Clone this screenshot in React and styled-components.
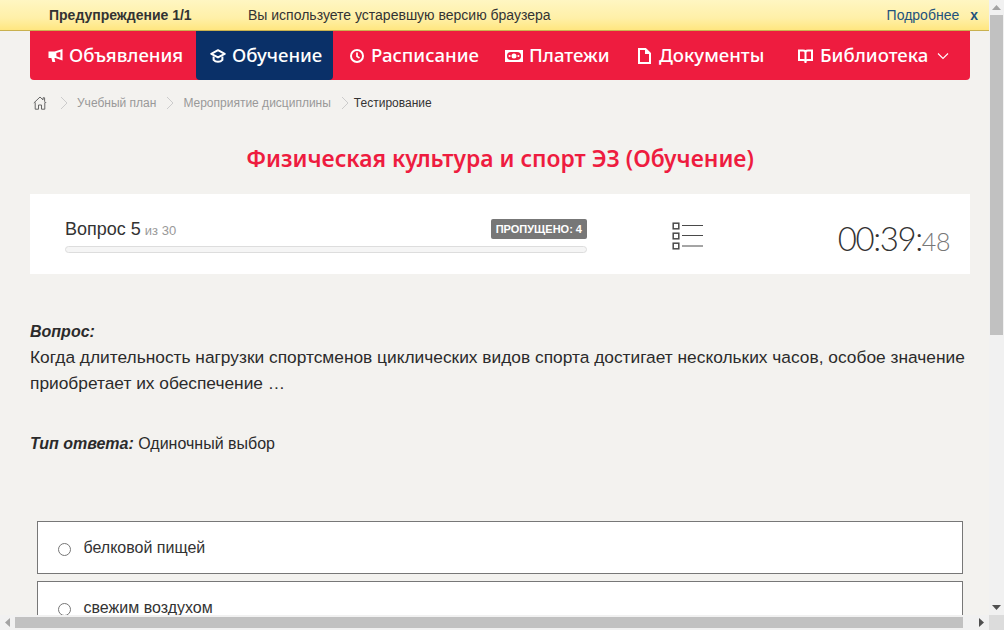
import React from "react";
import styled, { createGlobalStyle } from "styled-components";

const Global = createGlobalStyle`
  html, body {
    margin: 0;
    padding: 0;
    overflow: hidden;
  }
  body {
    background: #f3f2ef;
    font-family: "Liberation Sans", Arial, sans-serif;
    color: #333;
  }
`;

const Frame = styled.div`
  width: 1004px;
  height: 630px;
  display: grid;
  grid-template-columns: 989px 15px;
  grid-template-rows: 615px 15px;
  overflow: hidden;
`;

const Viewport = styled.div`
  overflow: hidden;
  background: #f3f2ef;
`;

const Banner = styled.div`
  height: 30px;
  border-bottom: 1px solid #c9b14f;
  background: linear-gradient(to bottom, #fff6c2 0%, #fff0a8 60%, #ffe680 100%);
  display: flex;
  align-items: center;
  padding: 0 11px 0 49px;
  font-size: 14px;
  color: #333;
`;

const BannerTitle = styled.b`
  width: 199px;
`;

const BannerText = styled.span`
  flex: 1;
`;

const BannerLink = styled.a`
  color: #23527c;
  margin-right: 11px;
`;

const BannerClose = styled.b`
  color: #23527c;
`;

const Page = styled.div`
  padding: 0 19px 0 30px;
`;

const Nav = styled.nav`
  height: 49px;
  display: flex;
  background: #ee1c3f;
  border-radius: 0 0 4px 4px;
`;

const NavItem = styled.a`
  width: ${(p) => p.$w}px;
  flex: none;
  box-sizing: border-box;
  padding: 0 0 2px ${(p) => p.$pad}px;
  display: flex;
  align-items: center;
  gap: ${(p) => p.$gap}px;
  color: #fff;
  background: ${(p) => (p.$active ? "#0a3068" : "transparent")};
  border-radius: ${(p) => (p.$active ? "0 0 4px 4px" : "0")};
  font-family: "Noto Sans", sans-serif;
  font-size: 18.6px;
  font-weight: 500;
  white-space: nowrap;
  svg {
    flex: none;
    margin-top: 2px;
  }
`;

const Crumbs = styled.div`
  height: 46px;
  display: flex;
  align-items: center;
  padding-left: 3px;
  font-size: 12px;
  color: #999;
`;

const Crumb = styled.span`
  margin-left: ${(p) => p.$ml}px;
  color: ${(p) => (p.$current ? "#333" : "#999")};
`;

const CrumbIcon = styled.svg`
  flex: none;
  margin-left: ${(p) => p.$ml || 0}px;
`;

const Title = styled.h1`
  margin: 0;
  height: 68px;
  box-sizing: border-box;
  padding-top: 15px;
  line-height: 36px;
  text-align: center;
  font-family: "Noto Sans", sans-serif;
  font-size: 22.85px;
  font-weight: 600;
  color: #ee1c3f;
`;

const StatusCard = styled.section`
  height: 80px;
  background: #fff;
  display: flex;
  align-items: flex-start;
  padding-left: 35px;
`;

const Progress = styled.div`
  width: 522px;
  padding-top: 25px;
`;

const ProgressHead = styled.div`
  height: 27px;
  display: flex;
  align-items: flex-start;
  justify-content: space-between;
`;

const QuestionNo = styled.div`
  font-size: 18px;
  line-height: 21px;
  color: #333;
  small {
    font-size: 13px;
    color: #999;
    margin-left: -1px;
  }
`;

const Skipped = styled.span`
  background: #777;
  color: #fff;
  font-size: 11px;
  font-weight: 700;
  border-radius: 2px;
  padding: 3px 5px;
  line-height: 14px;
`;

const Bar = styled.div`
  height: 7px;
  box-sizing: border-box;
  border: 1px solid #ddd;
  border-radius: 4px;
  background: #f5f5f5;
`;

const ListButton = styled.svg`
  margin: 28px 0 0 85px;
  flex: none;
`;

const Timer = styled.div`
  margin-left: auto;
  padding: 23px 20px 0 0;
  font-family: "Lato", sans-serif;
  font-size: 33px;
  font-weight: 300;
  line-height: 42px;
  letter-spacing: -1.4px;
  color: #333;
  small {
    font-size: 25px;
    letter-spacing: -0.4px;
    color: #777;
  }
`;

const Question = styled.div`
  margin-top: 45px;
  font-size: 17.33px;
  line-height: 26px;
  color: #2b2b2b;
`;

const QuestionLabel = styled.div`
  font-size: 16px;
  font-weight: 700;
  font-style: italic;
  line-height: 25px;
`;

const AnswerType = styled.div`
  margin-top: 35px;
  font-size: 16px;
  line-height: 26px;
  color: #2b2b2b;
`;

const Answers = styled.div`
  margin: 64px 7px 0;
  display: flex;
  flex-direction: column;
  gap: 7px;
`;

const Answer = styled.label`
  height: 53px;
  box-sizing: border-box;
  border: 1px solid #777;
  background: #fff;
  display: flex;
  align-items: center;
  padding-left: 20px;
  font-size: 16px;
  color: #333;
  gap: 12.5px;
`;

const Radio = styled.input`
  margin: 3px 0 0;
  width: 13px;
  height: 13px;
`;

const ScrollY = styled.div`
  background: #f1f1f1;
  display: flex;
  flex-direction: column;
  align-items: center;
  justify-content: space-between;
  position: relative;
`;

const ThumbY = styled.div`
  position: absolute;
  top: 15px;
  left: 1px;
  width: 13px;
  height: 320px;
  background: #c1c1c1;
`;

const ScrollX = styled.div`
  background: #f1f1f1;
  display: flex;
  align-items: center;
  justify-content: space-between;
  position: relative;
`;

const ThumbX = styled.div`
  position: absolute;
  left: 15px;
  top: 2px;
  width: 948px;
  height: 11px;
  background: #c1c1c1;
`;

const Corner = styled.div`
  background: #dcdcdc;
`;

const Arrow = styled.svg`
  flex: none;
  margin: ${(p) => p.$m || "0"};
`;

const Megaphone = ({ hole }) => (
  <svg width="15" height="15" viewBox="0 0 15 15" fill="none">
    <path d="M.5 3.5h6.2L14.5 1v11.5L7.5 10H6.4l.9 4H4.4l-1-4H.5z" fill="#fff" />
    <path d="M8.4 5l4-1.2v6L8.4 8.3z" fill={hole} />
  </svg>
);

const Cap = () => (
  <svg width="16" height="16" viewBox="0 0 16 16" fill="none">
    <path d="M8 2.2L1.3 5.8 8 9.4l6.7-3.6z" stroke="#fff" strokeWidth="2" strokeLinejoin="round" />
    <path d="M3.6 8.4v3.4c1.1 1.4 2.800 2 4.400 2s3.300-.6 4.400-2V8.400" stroke="#fff" strokeWidth="2" />
  </svg>
);

const Clock = () => (
  <svg width="16" height="16" viewBox="0 0 16 16" fill="none">
    <circle cx="8" cy="8" r="6" stroke="#fff" strokeWidth="2" />
    <path d="M8 4.5V8.4L10.5 10" stroke="#fff" strokeWidth="1.7" />
  </svg>
);

const Money = () => (
  <svg width="18" height="12" viewBox="0 0 18 12" fill="none">
    <rect x="0" y="0" width="18" height="12" fill="#fff" />
    <rect x="2" y="2" width="14" height="8" rx="4" fill="#ee1c3f" />
    <circle cx="9" cy="6" r="2.5" fill="#fff" />
    <circle cx="4.6" cy="6" r="1.1" fill="#fff" />
    <circle cx="13.4" cy="6" r="1.1" fill="#fff" />
  </svg>
);

const Doc = () => (
  <svg width="13" height="16" viewBox="0 0 13 16" fill="none">
    <path d="M1 1h6.5L12 5.500V15H1z" stroke="#fff" strokeWidth="2" />
    <path d="M7 1v5h5z" fill="#fff" />
  </svg>
);

const Book = () => (
  <svg width="15" height="16" viewBox="0 0 15 16" fill="none">
    <path d="M1 2.5h4c1.2 0 2 .4 2.500 1 .5-.6 1.300-1 2.500-1h4V12H9.500c-1 0-1.500.3-2 .8-.5-.5-1-.8-2-.8H1z" stroke="#fff" strokeWidth="2" />
    <path d="M7.5 3v12" stroke="#fff" strokeWidth="2" />
  </svg>
);

const Chevron = () => (
  <svg width="12" height="8" viewBox="0 0 12 8" fill="none" style={{ marginLeft: 2 }}>
    <path d="M1 1.5l5 5 5-5" stroke="#fff" strokeWidth="1.1" />
  </svg>
);

const Home = () => (
  <CrumbIcon width="14" height="14" viewBox="0 0 14 14" fill="none">
    <path d="M.8 7L7 1l3 2.900V1.800h1.600v3.600L13.200 7M2.200 6.400v6.800h3.300V9h3v4.200h3.300V6.400" stroke="#666" strokeWidth="1" />
  </CrumbIcon>
);

const Sep = ({ ml }) => (
  <CrumbIcon $ml={ml} width="8" height="14" viewBox="0 0 8 14" fill="none">
    <path d="M1 1l6 6-6 6" stroke="#ccc" strokeWidth="1" />
  </CrumbIcon>
);

const App = () => (
  <>
    <Global />
    <Frame>
      <Viewport>
        <Banner>
          <BannerTitle>Предупреждение 1/1</BannerTitle>
          <BannerText>Вы используете устаревшую версию браузера</BannerText>
          <BannerLink>Подробнее</BannerLink>
          <BannerClose>x</BannerClose>
        </Banner>
        <Page>
          <Nav>
            <NavItem $w={166} $pad={18} $gap={6}><Megaphone hole="#ee1c3f" />Объявления</NavItem>
            <NavItem $w={137} $pad={14} $gap={6} $active><Cap />Обучение</NavItem>
            <NavItem $w={156} $pad={16} $gap={6}><Clock />Расписание</NavItem>
            <NavItem $w={132} $pad={16} $gap={6}><Money />Платежи</NavItem>
            <NavItem $w={156} $pad={17} $gap={8}><Doc />Документы</NavItem>
            <NavItem $w={193} $pad={21} $gap={7}><Book />Библиотека<Chevron /></NavItem>
          </Nav>
          <Crumbs>
            <Home />
            <Sep ml={13} />
            <Crumb $ml={9}>Учебный план</Crumb>
            <Sep ml={10} />
            <Crumb $ml={9}>Мероприятие дисциплины</Crumb>
            <Sep ml={10} />
            <Crumb $ml={5} $current>Тестирование</Crumb>
          </Crumbs>
          <Title>Физическая культура и спорт ЭЗ (Обучение)</Title>
          <StatusCard>
            <Progress>
              <ProgressHead>
                <QuestionNo>Вопрос 5 <small>из 30</small></QuestionNo>
                <Skipped>ПРОПУЩЕНО: 4</Skipped>
              </ProgressHead>
              <Bar />
            </Progress>
            <ListButton width="32" height="28" viewBox="0 0 32 28" fill="none">
              <g stroke="#4a4a4a">
                <rect x="1.2" y="1.2" width="5.6" height="5.6" strokeWidth="1.5" />
                <rect x="1.2" y="11.2" width="5.6" height="5.6" strokeWidth="1.5" />
                <rect x="1.2" y="21.2" width="5.6" height="5.6" strokeWidth="1.5" />
                <path d="M10 3.500h21M10 13.500h21M10 24h21" strokeWidth="1" />
              </g>
            </ListButton>
            <Timer>00:39:<small>48</small></Timer>
          </StatusCard>
          <Question>
            <QuestionLabel>Вопрос:</QuestionLabel>
            Когда длительность нагрузки спортсменов циклических видов спорта достигает нескольких часов, особое значение приобретает их обеспечение …
          </Question>
          <AnswerType>
            <b><i>Тип ответа:</i></b> Одиночный выбор
          </AnswerType>
          <Answers>
            <Answer><Radio type="radio" name="a" />белковой пищей</Answer>
            <Answer><Radio type="radio" name="a" />свежим воздухом</Answer>
          </Answers>
        </Page>
      </Viewport>
      <ScrollY>
        <ThumbY />
        <Arrow $m="5px 0 0" width="9" height="5" viewBox="0 0 9 5"><path d="M4.5 0L9 5H0z" fill="#a3a3a3" /></Arrow>
        <Arrow $m="0 0 5px" width="9" height="5" viewBox="0 0 9 5"><path d="M0 0h9L4.5 5z" fill="#505050" /></Arrow>
      </ScrollY>
      <ScrollX>
        <ThumbX />
        <Arrow $m="0 0 0 5px" width="5" height="9" viewBox="0 0 5 9"><path d="M5 0v9L0 4.500z" fill="#a3a3a3" /></Arrow>
        <Arrow $m="0 5px 0 0" width="5" height="9" viewBox="0 0 5 9"><path d="M0 0v9l5-4.500z" fill="#505050" /></Arrow>
      </ScrollX>
      <Corner />
    </Frame>
  </>
);

export default App;
